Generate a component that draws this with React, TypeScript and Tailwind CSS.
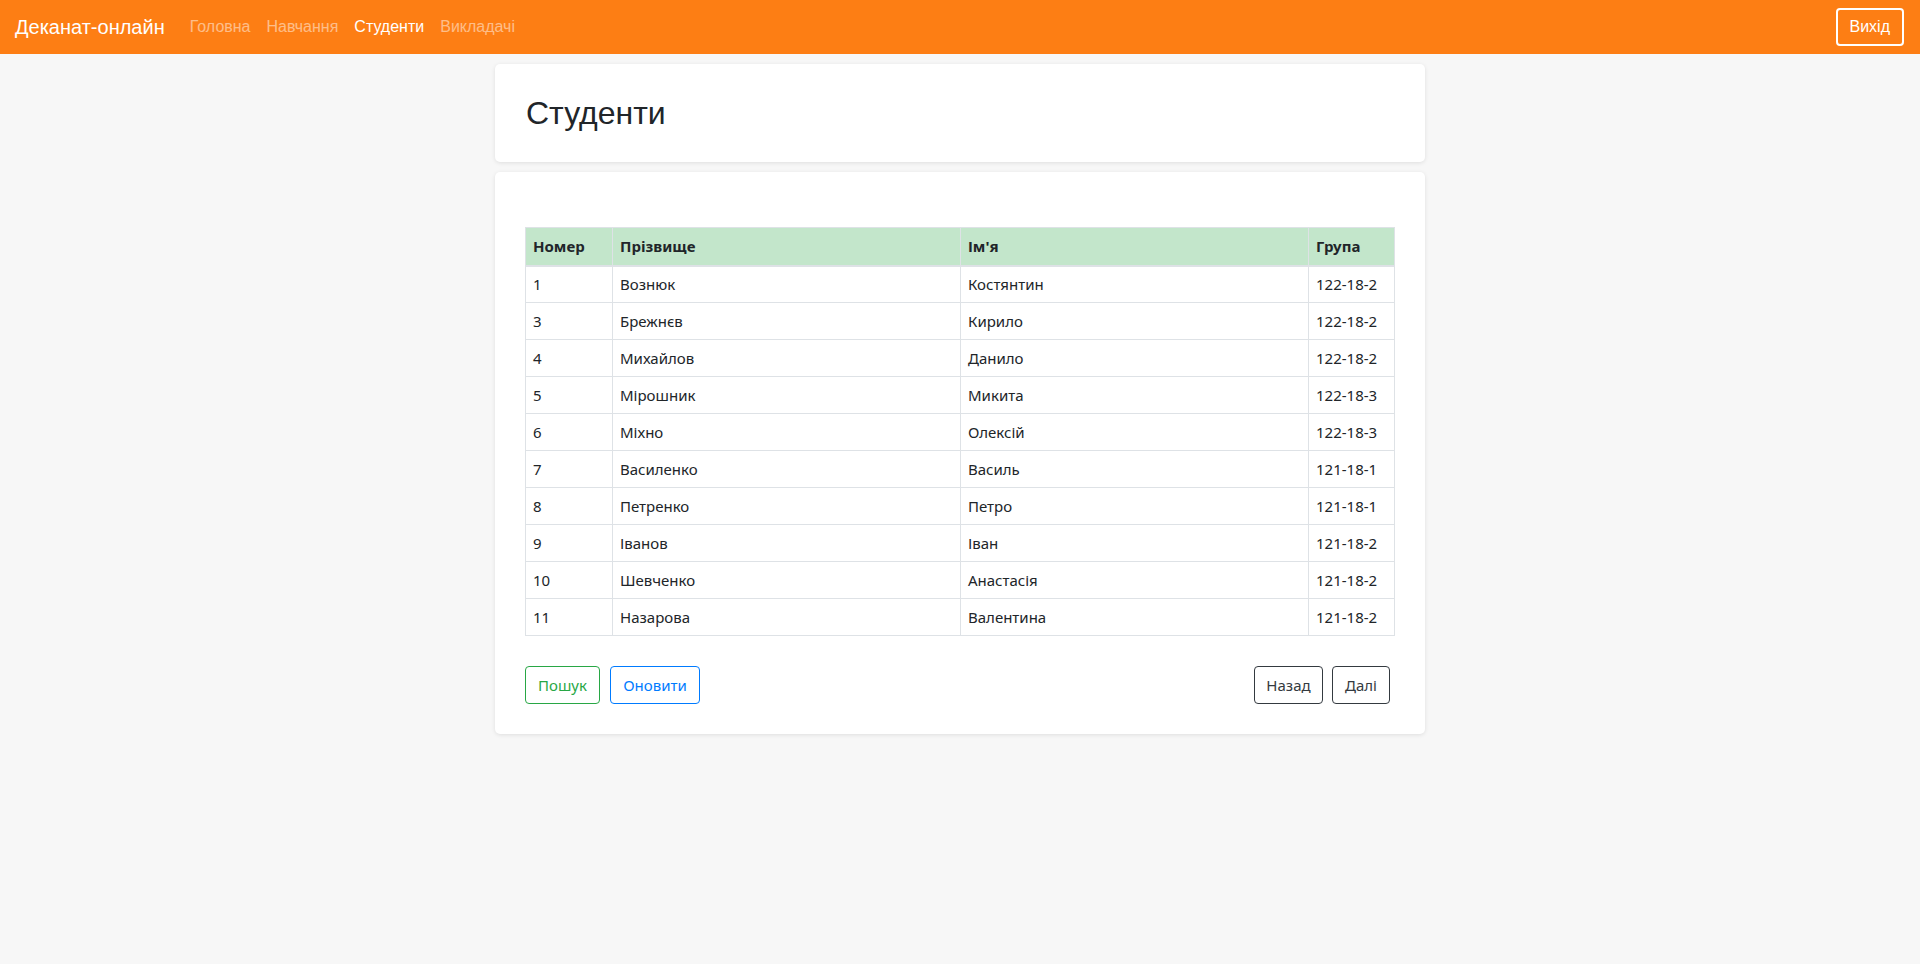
import React from "react";

const students = [
  { id: 1, last: "Вознюк", first: "Костянтин", group: "122-18-2" },
  { id: 3, last: "Брежнєв", first: "Кирило", group: "122-18-2" },
  { id: 4, last: "Михайлов", first: "Данило", group: "122-18-2" },
  { id: 5, last: "Мірошник", first: "Микита", group: "122-18-3" },
  { id: 6, last: "Міхно", first: "Олексій", group: "122-18-3" },
  { id: 7, last: "Василенко", first: "Василь", group: "121-18-1" },
  { id: 8, last: "Петренко", first: "Петро", group: "121-18-1" },
  { id: 9, last: "Іванов", first: "Іван", group: "121-18-2" },
  { id: 10, last: "Шевченко", first: "Анастасія", group: "121-18-2" },
  { id: 11, last: "Назарова", first: "Валентина", group: "121-18-2" },
];

const navLinks = [
  { label: "Головна", active: false },
  { label: "Навчання", active: false },
  { label: "Студенти", active: true },
  { label: "Викладачі", active: false },
];

const Navbar = () => (
  <nav className="h-[54px] bg-[#fd7e14] flex items-center justify-between pl-[15px] pr-4 font-['Liberation_Sans',Arial,sans-serif]">
    <div className="flex items-center">
      <a className="text-white text-[20px] mr-[17px]">Деканат-онлайн</a>
      <ul className="flex">
        {navLinks.map((l) => (
          <li key={l.label}>
            <a
              className={
                "block px-2 text-[16px] " +
                (l.active ? "text-white" : "text-white/50")
              }
            >
              {l.label}
            </a>
          </li>
        ))}
      </ul>
    </div>
    <button className="h-[38px] px-[12px] border-2 border-white rounded-[4px] text-white text-[16px]">
      Вихід
    </button>
  </nav>
);

const Cell = ({ children }: { children: React.ReactNode }) => (
  <td className="border border-[#dee2e6] px-[7px] h-[37px] align-middle">
    {children}
  </td>
);

export default function App() {
  return (
    <div className="min-h-[964px] bg-[#f7f7f7]">
      <Navbar />
      <main className="w-[930px] mx-auto pt-[10px] font-['Noto_Sans','Open_Sans',sans-serif] text-[#212529]">
        <div className="bg-white rounded-[5px] shadow-[0_1px_4px_rgba(0,0,0,0.1)] h-[98px] flex items-center pl-[31px]">
          <h2 className="text-[32px] font-['Liberation_Sans',Arial,sans-serif] text-[#212529]">
            Студенти
          </h2>
        </div>

        <div className="mt-[10px] bg-white rounded-[5px] shadow-[0_1px_4px_rgba(0,0,0,0.1)] px-[30px] pt-[55px] pb-[30px]">
          <table className="w-full border-collapse text-[15px]">
            <thead>
              <tr className="bg-[#c3e6cb]">
                <th className="border border-[#dee2e6] border-b-2 px-[7px] h-[38px] text-left font-bold w-[87px]">Номер</th>
                <th className="border border-[#dee2e6] border-b-2 px-[7px] text-left font-bold w-[348px]">Прізвище</th>
                <th className="border border-[#dee2e6] border-b-2 px-[7px] text-left font-bold w-[348px]">Ім'я</th>
                <th className="border border-[#dee2e6] border-b-2 px-[7px] text-left font-bold">Група</th>
              </tr>
            </thead>
            <tbody>
              {students.map((s) => (
                <tr key={s.id}>
                  <Cell>{s.id}</Cell>
                  <Cell>{s.last}</Cell>
                  <Cell>{s.first}</Cell>
                  <Cell>{s.group}</Cell>
                </tr>
              ))}
            </tbody>
          </table>

          <div className="mt-[30px] flex items-center justify-between">
            <div className="flex gap-[10px]">
              <button className="h-[38px] w-[75px] border border-[#28a745] text-[#28a745] rounded-[4px] text-[15px]">
                Пошук
              </button>
              <button className="h-[38px] w-[90px] border border-[#007bff] text-[#007bff] rounded-[4px] text-[15px]">
                Оновити
              </button>
            </div>
            <div className="flex gap-[9px] mr-[5px]">
              <button className="h-[38px] w-[69px] border border-[#343a40] text-[#343a40] rounded-[4px] text-[15px]">
                Назад
              </button>
              <button className="h-[38px] w-[58px] border border-[#343a40] text-[#343a40] rounded-[4px] text-[15px]">
                Далі
              </button>
            </div>
          </div>
        </div>
      </main>
    </div>
  );
}
